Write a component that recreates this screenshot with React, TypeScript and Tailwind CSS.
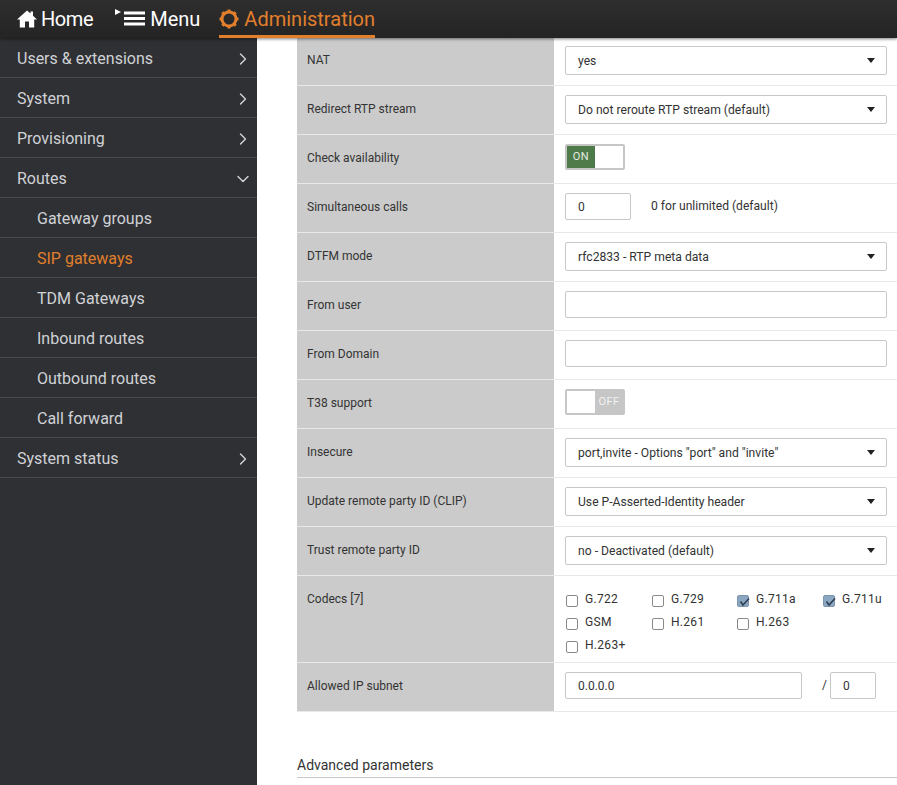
import type { ReactNode } from 'react';
import { ChevronDown, ChevronRight } from 'lucide-react';

const sideItems = [
  { title: 'Users & extensions', icon: 'right' },
  { title: 'System', icon: 'right' },
  { title: 'Provisioning', icon: 'right' },
  { title: 'Routes', icon: 'down' },
  { title: 'Gateway groups', sub: true },
  { title: 'SIP gateways', sub: true, active: true },
  { title: 'TDM Gateways', sub: true },
  { title: 'Inbound routes', sub: true },
  { title: 'Outbound routes', sub: true },
  { title: 'Call forward', sub: true },
  { title: 'System status', icon: 'right' },
];

const codecs = [
  { name: 'G.722' },
  { name: 'G.729' },
  { name: 'G.711a', checked: true },
  { name: 'G.711u', checked: true },
  { name: 'GSM' },
  { name: 'H.261' },
  { name: 'H.263' },
  { name: 'H.263+', newRow: true },
];

function Select({ value }: { value: string }) {
  return (
    <div className="flex h-[29px] w-[322px] items-center justify-between rounded-[2px] border border-[#c8c8c8] bg-white pl-[12px] pr-[11px] text-[12.15px] text-[#333]">
      <span className="pt-[1px]">{value}</span>
      <span className="h-0 w-0 border-x-[4px] border-t-[5px] border-x-transparent border-t-[#222]" />
    </div>
  );
}

function TextInput({ value = '', className = 'w-[322px]' }: { value?: string; className?: string }) {
  return (
    <div className={`flex h-[27px] items-center rounded-[2px] border border-[#c8c8c8] bg-white pl-[12px] text-[12px] text-[#333] ${className}`}>
      {value}
    </div>
  );
}

function Toggle({ on }: { on: boolean }) {
  return (
    <div className="flex h-[26px] w-[60px] overflow-hidden rounded-[2px] border-2 border-[#c6c6c6] bg-white text-[11px] tracking-[0.5px]">
      {on ? (
        <>
          <span className="flex w-[28px] items-center justify-center bg-[#4f7b4b] text-[#e4ece3]">ON</span>
          <span className="flex-1 bg-white" />
        </>
      ) : (
        <>
          <span className="w-[28px] bg-white" />
          <span className="flex flex-1 items-center justify-center bg-[#c6c6c6] text-[#f2f2f2]">OFF</span>
        </>
      )}
    </div>
  );
}

function Row({ label, children, height = 'h-[49px]', top }: { label: string; children: ReactNode; height?: string; top?: boolean }) {
  return (
    <div className={`flex border-b border-[#e8e8e8] ${height}`}>
      <div className={`flex w-[257px] shrink-0 bg-[#cbcbcb] pl-[10px] text-[12px] text-[#333] ${top ? 'items-start pt-[14px]' : 'items-center pb-[2px]'}`}>
        {label}
      </div>
      <div className={`flex flex-1 items-start pl-[11px] ${top ? 'pt-[18px]' : 'pt-[9px]'}`}>{children}</div>
    </div>
  );
}

function Checkbox({ name, checked, newRow }: { name: string; checked?: boolean; newRow?: boolean }) {
  return (
    <div className={`flex h-[14px] items-center gap-[7px] text-[12px] leading-[14px] tracking-[0.3px] text-[#333] ${newRow ? 'col-start-1' : ''}`}>
      <span className={`relative h-[12px] w-[12px] rounded-[2px] border ${checked ? 'border-[#7d94ad] bg-[#8ba6c1]' : 'border-[#8a8a8a] bg-white'}`}>
        {checked && (
          <svg viewBox="0 0 12 12" className="absolute left-0 top-0 h-[12px] w-[12px]">
            <path d="M2.5 5.5 L5 9 L11 2.5" fill="none" stroke="#2f3f52" strokeWidth="1.6" />
          </svg>
        )}
      </span>
      <span className="-mt-[4px]">{name}</span>
    </div>
  );
}

export default function App() {
  return (
    <div className="flex h-[785px] w-[897px] flex-col overflow-hidden bg-white font-['Roboto',sans-serif]">
      <header className="relative z-10 flex h-[38px] shrink-0 items-stretch bg-gradient-to-b from-[#2e2e2e] to-[#242424] pl-[17px] text-[20px] shadow-[0_1px_3px_rgba(0,0,0,0.5)]">
        <div className="flex items-center gap-[4px] pb-[1px] text-white">
          <svg viewBox="0 0 20 18" className="h-[18px] w-[20px]" fill="white">
            <path d="M10 0.5 L13.5 3.6 V1.5 H16 V5.8 L20 9.5 H17.2 V17.5 H12 V11.5 H8 V17.5 H2.8 V9.5 H0 Z" />
          </svg>
          <span className="tracking-[-0.4px]">Home</span>
        </div>
        <div className="ml-[22px] flex items-center pb-[1px] text-white">
          <span className="mb-[14px] h-0 w-0 border-y-[3.5px] border-l-[6px] border-y-transparent border-l-white" />
          <svg viewBox="0 0 21 15" className="ml-[3px] h-[15px] w-[21px]" fill="white">
            <rect x="0" y="0.5" width="21" height="3" />
            <rect x="0" y="6" width="21" height="3" />
            <rect x="0" y="11.5" width="21" height="3" />
          </svg>
          <span className="ml-[5px]">Menu</span>
        </div>
        <div className="ml-[19px] flex items-center gap-[5px] border-b-[3px] border-[#e17f2d] pt-[2px] text-[#e17f2d]">
          <svg viewBox="0 0 20 20" className="h-[20px] w-[20px]" fill="none" stroke="#e17f2d">
            <circle cx="10" cy="10" r="7" strokeWidth="3" />
            <path d="M10 0.5 V3 M10 17 V19.5 M0.5 10 H3 M17 10 H19.5 M3.3 3.3 L5 5 M15 15 L16.7 16.7 M3.3 16.7 L5 15 M15 5 L16.7 3.3" strokeWidth="3" />
          </svg>
          <span>Administration</span>
        </div>
      </header>

      <div className="flex min-h-0 flex-1">
        <aside className="w-[257px] shrink-0 bg-[#2f3033] text-[#d0d2d6]">
          {sideItems.map((item) => (
            <div
              key={item.title}
              className={`flex h-[40px] items-center justify-between border-b border-[#484c52] pr-[4px] pt-[2px] text-[16px] ${item.sub ? 'pl-[37px]' : 'pl-[17px]'} ${item.active ? 'text-[#e17f2d]' : ''}`}
            >
              <span>{item.title}</span>
              {item.icon === 'right' && <ChevronRight className="h-[20px] w-[20px]" strokeWidth={1.7} />}
              {item.icon === 'down' && <ChevronDown className="h-[20px] w-[20px]" strokeWidth={1.7} />}
            </div>
          ))}
        </aside>

        <main className="-mt-[1px] min-w-0 flex-1 pl-[40px]">
          <Row label="NAT">
            <Select value="yes" />
          </Row>
          <Row label="Redirect RTP stream">
            <Select value="Do not reroute RTP stream (default)" />
          </Row>
          <Row label="Check availability">
            <Toggle on />
          </Row>
          <Row label="Simultaneous calls">
            <TextInput value="0" className="w-[66px]" />
            <span className="ml-[20px] text-[12.1px] leading-[27px] text-[#333]">0 for unlimited (default)</span>
          </Row>
          <Row label="DTFM mode">
            <Select value="rfc2833 - RTP meta data" />
          </Row>
          <Row label="From user">
            <TextInput />
          </Row>
          <Row label="From Domain">
            <TextInput />
          </Row>
          <Row label="T38 support">
            <Toggle on={false} />
          </Row>
          <Row label="Insecure">
            <Select value={'port,invite - Options "port" and "invite"'} />
          </Row>
          <Row label="Update remote party ID (CLIP)">
            <Select value="Use P-Asserted-Identity header" />
          </Row>
          <Row label="Trust remote party ID">
            <Select value="no - Deactivated (default)" />
          </Row>
          <Row label="Codecs [7]" height="h-[87px]" top>
            <div className="grid w-[344px] grid-cols-[86px_85px_86px_86px] gap-y-[9px] pl-[1px]">
              {codecs.map((codec) => (
                <Checkbox key={codec.name} name={codec.name} checked={codec.checked} newRow={codec.newRow} />
              ))}
            </div>
          </Row>
          <Row label="Allowed IP subnet">
            <TextInput value="0.0.0.0" className="w-[237px]" />
            <span className="ml-[20px] text-[12px] leading-[27px] text-[#333]">/</span>
            <TextInput value="0" className="ml-[3px] w-[46px]" />
          </Row>
          <div className="mt-[43px] border-b border-[#c8c8c8] pb-[1px] text-[14px] text-[#333]">Advanced parameters</div>
        </main>
      </div>
    </div>
  );
}
